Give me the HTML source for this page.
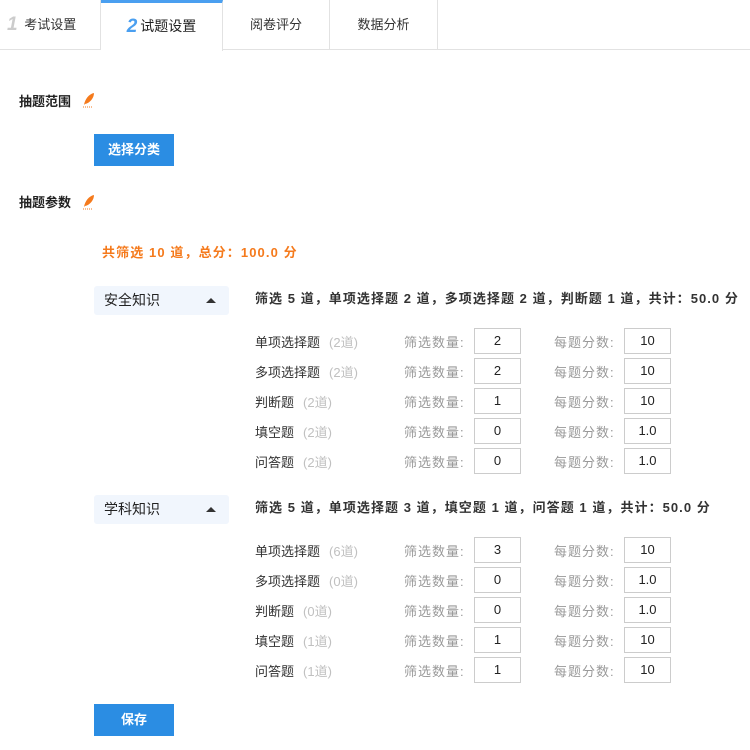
<!DOCTYPE html>
<html><head><meta charset="utf-8"><style>
*{margin:0;padding:0;box-sizing:border-box}
body{width:750px;height:750px;background:#fff;font-family:"Liberation Sans","Noto Sans CJK SC",sans-serif;font-size:13px;color:#333;position:relative;overflow:hidden}
.a{position:absolute;white-space:nowrap}
.tabs{position:absolute;left:0;top:0;width:750px;height:50px;border-bottom:1px solid #e2e2e2}
.tab{position:absolute;top:0;height:50px;border-right:1px solid #e2e2e2;line-height:50px;text-align:center;font-size:13px;color:#333}
.tab.on{background:#fff;height:51px;border-top:3px solid #4a9ff0;line-height:46px;font-size:14px;color:#222}
.num{font-style:italic;font-weight:bold;font-size:19px;margin-right:3px;vertical-align:-1px}
.lbl{font-weight:bold;font-size:13px;color:#222}
.btn{position:absolute;background:#2b8de3;color:#fff;font-weight:bold;text-align:center;font-size:13px}
.cat{position:absolute;left:94px;width:135px;height:29px;background:#f1f6fd;border-radius:3px;font-size:14px;line-height:29px;padding-left:10px;color:#222}
.cat:after{content:"";position:absolute;right:13px;top:12px;border-left:5px solid transparent;border-right:5px solid transparent;border-bottom:5px solid #333}
.hd{font-weight:bold;color:#333;font-size:13px;letter-spacing:1.05px}
.gray{color:#c0c0c0;margin-left:9px}
.g2{color:#999;letter-spacing:1px}
.in{position:absolute;width:47px;height:26px;border:1px solid #ccc;text-align:center;line-height:24px;color:#222;font-size:13px}
</style></head><body>
<div class="tabs">
<div class="tab" style="left:0;width:101px;text-align:left;padding-left:7px"><span class="num" style="color:#ccc">1</span> 考试设置</div>
<div class="tab on" style="left:101px;width:122px"><span class="num" style="color:#4a9ff0">2</span>试题设置</div>
<div class="tab" style="left:223px;width:107px">阅卷评分</div>
<div class="tab" style="left:330px;width:108px">数据分析</div>
</div>
<div class="a lbl" style="left:19px;top:91px">抽题范围</div>
<svg class="a" style="left:82px;top:92px" width="14" height="16" viewBox="0 0 14 16"><path d="M2 13 C3 7 7 2 12 1 C12 6 8 11 3 12 Z" fill="#f57a1c"/><path d="M1 15 h10" stroke="#f57a1c" stroke-dasharray="1 1"/></svg>
<div class="btn" style="left:94px;top:134px;width:80px;height:32px;line-height:32px">选择分类</div>
<div class="a lbl" style="left:19px;top:192px">抽题参数</div>
<svg class="a" style="left:82px;top:194px" width="14" height="16" viewBox="0 0 14 16"><path d="M2 13 C3 7 7 2 12 1 C12 6 8 11 3 12 Z" fill="#f57a1c"/><path d="M1 15 h10" stroke="#f57a1c" stroke-dasharray="1 1"/></svg>
<div class="a" style="left:102px;top:242px;color:#f57a1c;font-weight:bold;font-size:13px;letter-spacing:1.1px">共筛选 10 道，总分：100.0 分</div>

<div class="cat" style="top:286px">安全知识</div>
<div class="a hd" style="left:255px;top:288px">筛选 5 道，单项选择题 2 道，多项选择题 2 道，判断题 1 道，共计：50.0 分</div>

<div class="cat" style="top:495px">学科知识</div>
<div class="a hd" style="left:255px;top:497px">筛选 5 道，单项选择题 3 道，填空题 1 道，问答题 1 道，共计：50.0 分</div>

<div class="btn" style="left:94px;top:704px;width:80px;height:32px;line-height:32px">保存</div>

<div class="a" style="left:255px;top:332px">单项选择题<span class="gray">(2道)</span></div><div class="a g2" style="left:404px;top:332px">筛选数量:</div><div class="in" style="left:474px;top:328px">2</div><div class="a g2" style="left:554px;top:332px">每题分数:</div><div class="in" style="left:624px;top:328px">10</div>
<div class="a" style="left:255px;top:362px">多项选择题<span class="gray">(2道)</span></div><div class="a g2" style="left:404px;top:362px">筛选数量:</div><div class="in" style="left:474px;top:358px">2</div><div class="a g2" style="left:554px;top:362px">每题分数:</div><div class="in" style="left:624px;top:358px">10</div>
<div class="a" style="left:255px;top:392px">判断题<span class="gray">(2道)</span></div><div class="a g2" style="left:404px;top:392px">筛选数量:</div><div class="in" style="left:474px;top:388px">1</div><div class="a g2" style="left:554px;top:392px">每题分数:</div><div class="in" style="left:624px;top:388px">10</div>
<div class="a" style="left:255px;top:422px">填空题<span class="gray">(2道)</span></div><div class="a g2" style="left:404px;top:422px">筛选数量:</div><div class="in" style="left:474px;top:418px">0</div><div class="a g2" style="left:554px;top:422px">每题分数:</div><div class="in" style="left:624px;top:418px">1.0</div>
<div class="a" style="left:255px;top:452px">问答题<span class="gray">(2道)</span></div><div class="a g2" style="left:404px;top:452px">筛选数量:</div><div class="in" style="left:474px;top:448px">0</div><div class="a g2" style="left:554px;top:452px">每题分数:</div><div class="in" style="left:624px;top:448px">1.0</div>

<div class="a" style="left:255px;top:541px">单项选择题<span class="gray">(6道)</span></div><div class="a g2" style="left:404px;top:541px">筛选数量:</div><div class="in" style="left:474px;top:537px">3</div><div class="a g2" style="left:554px;top:541px">每题分数:</div><div class="in" style="left:624px;top:537px">10</div>
<div class="a" style="left:255px;top:571px">多项选择题<span class="gray">(0道)</span></div><div class="a g2" style="left:404px;top:571px">筛选数量:</div><div class="in" style="left:474px;top:567px">0</div><div class="a g2" style="left:554px;top:571px">每题分数:</div><div class="in" style="left:624px;top:567px">1.0</div>
<div class="a" style="left:255px;top:601px">判断题<span class="gray">(0道)</span></div><div class="a g2" style="left:404px;top:601px">筛选数量:</div><div class="in" style="left:474px;top:597px">0</div><div class="a g2" style="left:554px;top:601px">每题分数:</div><div class="in" style="left:624px;top:597px">1.0</div>
<div class="a" style="left:255px;top:631px">填空题<span class="gray">(1道)</span></div><div class="a g2" style="left:404px;top:631px">筛选数量:</div><div class="in" style="left:474px;top:627px">1</div><div class="a g2" style="left:554px;top:631px">每题分数:</div><div class="in" style="left:624px;top:627px">10</div>
<div class="a" style="left:255px;top:661px">问答题<span class="gray">(1道)</span></div><div class="a g2" style="left:404px;top:661px">筛选数量:</div><div class="in" style="left:474px;top:657px">1</div><div class="a g2" style="left:554px;top:661px">每题分数:</div><div class="in" style="left:624px;top:657px">10</div>
</body></html>
